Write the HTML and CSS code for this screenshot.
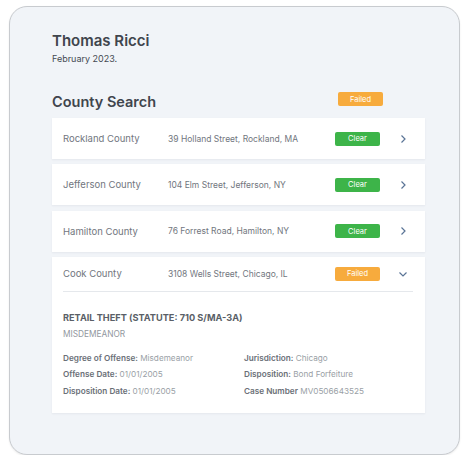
FILE: index.html
```html
<!DOCTYPE html>
<html>
<head>
<meta charset="utf-8">
<link rel="stylesheet" href="styles.css">
</head>
<body>
<div class="frame">
  <h1 class="name">Thomas Ricci</h1>
  <div class="date">February 2023.</div>
  <div class="section-head">
    <h2 class="section-title">County Search</h2>
    <span class="badge failed head-badge">Failed</span>
  </div>
  <div class="rows">
    <div class="row">
      <div class="row-main">
        <span class="county">Rockland County</span>
        <span class="addr">39 Holland Street, Rockland, MA</span>
        <span class="badge clear">Clear</span>
        <svg class="chev" viewBox="0 0 10 10"><path d="M3.5 1.5 L7 5 L3.5 8.5"/></svg>
      </div>
    </div>
    <div class="row">
      <div class="row-main">
        <span class="county">Jefferson County</span>
        <span class="addr">104 Elm Street, Jefferson, NY</span>
        <span class="badge clear">Clear</span>
        <svg class="chev" viewBox="0 0 10 10"><path d="M3.5 1.5 L7 5 L3.5 8.5"/></svg>
      </div>
    </div>
    <div class="row">
      <div class="row-main">
        <span class="county">Hamilton County</span>
        <span class="addr">76 Forrest Road, Hamilton, NY</span>
        <span class="badge clear">Clear</span>
        <svg class="chev" viewBox="0 0 10 10"><path d="M3.5 1.5 L7 5 L3.5 8.5"/></svg>
      </div>
    </div>
    <div class="row open">
      <div class="row-main divided">
        <span class="county">Cook County</span>
        <span class="addr">3108 Wells Street, Chicago, IL</span>
        <span class="badge failed">Failed</span>
        <svg class="chev" viewBox="0 0 10 10"><path d="M1.5 3.5 L5 7 L8.5 3.5"/></svg>
      </div>
      <div class="details">
        <div class="offense">RETAIL THEFT (STATUTE: 710 S/MA-3A)</div>
        <div class="level">MISDEMEANOR</div>
        <div class="grid">
          <div><b>Degree of Offense:</b> Misdemeanor</div>
          <div><b>Jurisdiction:</b> Chicago</div>
          <div><b>Offense Date:</b> 01/01/2005</div>
          <div><b>Disposition:</b> Bond Forfeiture</div>
          <div><b>Disposition Date:</b> 01/01/2005</div>
          <div><b>Case Number</b> MV0506643525</div>
        </div>
      </div>
    </div>
  </div>
</div>
</body>
</html>
```
FILE: styles.css
```css
* { box-sizing: border-box; }
html, body { margin: 0; padding: 0; background: #ffffff; }
body {
  font-family: "Inter", "Noto Sans", sans-serif;
  color: #4a4f57;
}
.frame {
  margin: 6px 0 0 9px;
  width: 451px;
  height: 449px;
  border: 1px solid #c8cbcf;
  border-radius: 18px;
  background: #f1f4f8;
  padding: 24px 34px 0 42px;
  box-shadow: 0 1px 2px rgba(0,0,0,0.08);
}
.name {
  margin: 0;
  font-size: 15px;
  line-height: 20px;
  font-weight: 600;
  color: #40454d;
}
.date {
  margin-top: 2px;
  font-size: 9px;
  line-height: 12px;
  color: #454a52;
}
.section-head {
  display: flex;
  align-items: flex-start;
  justify-content: space-between;
  margin-top: 21px;
  padding-right: 42px;
}
.section-title {
  margin: 7px 0 0 0;
  font-size: 14.5px;
  line-height: 18px;
  font-weight: 600;
  color: #40454d;
}
.head-badge { margin-top: 6px; }
.badge {
  display: inline-flex;
  align-items: center;
  justify-content: center;
  width: 45px;
  height: 14px;
  border-radius: 2px;
  font-size: 7.5px;
  color: #ffffff;
}
.badge.failed { background: #f7ab3d; }
.badge.clear { background: #3db449; }
.rows {
  margin-top: 7px;
  display: flex;
  flex-direction: column;
  gap: 5.3px;
}
.row {
  background: #ffffff;
  box-shadow: 0 1px 2px rgba(30,40,60,0.06);
}
.row-main {
  display: flex;
  align-items: center;
  height: 41px;
  padding: 0 17px 0 11px;
}
.row-main.divided {
  height: 35px;
  margin: 0 12px 0 11px;
  padding: 0 5px 0 0;
  border-bottom: 1.5px solid #e5e8ec;
}
.county {
  width: 105px;
  font-size: 9.5px;
  color: #71767e;
}
.addr {
  flex: 1;
  font-size: 8.5px;
  color: #71767e;
}
.chev {
  width: 10px;
  height: 10px;
  margin-left: 18px;
  fill: none;
  stroke: #5a7496;
  stroke-width: 1.2;
}
.details {
  padding: 20px 11px 16px 11px;
}
.offense {
  font-size: 9.2px;
  font-weight: 700;
  color: #5a5f67;
  line-height: 12px;
}
.level {
  margin-top: 4px;
  font-size: 8.3px;
  color: #92979e;
  line-height: 12px;
}
.grid {
  margin-top: 12px;
  display: grid;
  grid-template-columns: 181px 1fr;
  row-gap: 4.5px;
  font-size: 8.2px;
  line-height: 12px;
  color: #9a9fa6;
}
.grid b {
  font-weight: 600;
  color: #6a6f77;
}
```
